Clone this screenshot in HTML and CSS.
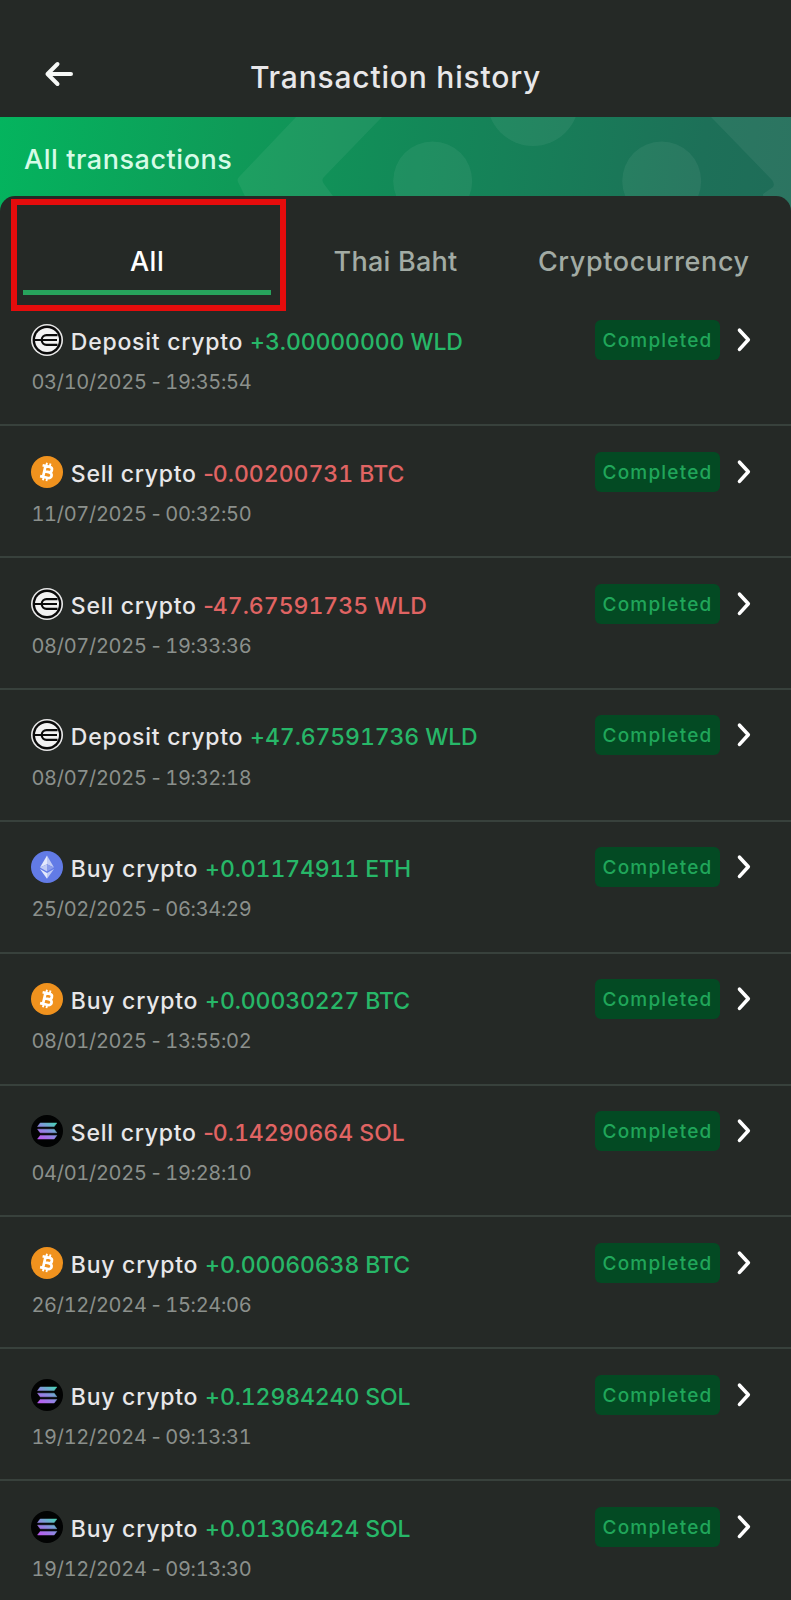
FILE: index.html
```html
<!DOCTYPE html>
<html lang="en">
<head>
<meta charset="utf-8">
<title>Transaction history</title>
<link rel="stylesheet" href="styles.css">
</head>
<body>
<svg class="symbols" aria-hidden="true">
  <defs>
    <linearGradient id="sol-gradient" gradientUnits="userSpaceOnUse" x1="10" y1="24" x2="22" y2="7">
      <stop offset="0" stop-color="#b95cf0"/>
      <stop offset="0.5" stop-color="#8a8ee0"/>
      <stop offset="1" stop-color="#4ccfb8"/>
    </linearGradient>
    <symbol id="wld" viewBox="0 0 32 32">
      <circle cx="16" cy="16" r="16" fill="#e8e8e8"/>
      <circle cx="16" cy="16" r="14.4" fill="#0a0a0a"/>
      <circle cx="16" cy="16" r="12" fill="#f2f2f2"/>
      <path d="M26.500 11.200H15.500a4.800 4.800 0 0 0 0 9.600H26.500M3.500 16H26" fill="none" stroke="#0a0a0a" stroke-width="2.2"/>
    </symbol>
    <symbol id="btc" viewBox="0 0 32 32">
      <circle cx="16" cy="16" r="16" fill="#f0921e"/>
      <g transform="rotate(13 16 16)" fill="none" stroke="#fff">
        <path d="M13.200 10.400V21.600M10.200 10.400H17.600a2.700 2.700 0 0 1 0 5.400H13.200M17.600 15.800H18.400a2.900 2.900 0 0 1 0 5.800H10.200" stroke-width="2.700"/>
        <path d="M13.900 7V10.400M17.500 7V10.400M13.900 21.400V25M17.500 21.400V25" stroke-width="1.900"/>
      </g>
    </symbol>
    <symbol id="eth" viewBox="0 0 32 32">
      <circle cx="16" cy="16" r="16" fill="#627be6"/>
      <path d="M16 4.500L9 16.400L16 13.200Z" fill="#e4e9fb"/>
      <path d="M16 4.500L23 16.400L16 13.200Z" fill="#c0cbf5"/>
      <path d="M9 16.400L16 13.200V20.600Z" fill="#c0cbf5"/>
      <path d="M23 16.400L16 13.200V20.600Z" fill="#8b9deb"/>
      <path d="M9 17.900L16 22V27.800Z" fill="#e4e9fb"/>
      <path d="M23 17.900L16 22V27.800Z" fill="#c0cbf5"/>
    </symbol>
    <symbol id="sol" viewBox="0 0 32 32">
      <circle cx="16" cy="16" r="16" fill="#020303"/>
      <path d="M9.200 8H25.800L23.200 11.600H6.600ZM6.600 14.200H23.200L25.800 17.800H9.200ZM9.200 20.400H25.800L23.200 24H6.600Z" fill="url(#sol-gradient)" stroke="url(#sol-gradient)" stroke-width="0.5" stroke-linejoin="round"/>
    </symbol>
    <symbol id="chevron" viewBox="0 0 16 26">
      <path d="M3.500 3.200L12.300 12.800L3.500 22.400" fill="none" stroke="#fff" stroke-width="3.6" stroke-linecap="round" stroke-linejoin="round"/>
    </symbol>
  </defs>
</svg>

<header class="topbar">
  <svg class="back" viewBox="0 0 32 28"><path d="M28 14H4.500M14.500 4L4.500 14L14.500 24" fill="none" stroke="#f6f8f6" stroke-width="4" stroke-linecap="round" stroke-linejoin="round"/></svg>
  <h1 class="title">Transaction history</h1>
</header>

<section class="banner">
  <svg class="pattern" viewBox="0 0 791 100" fill="#fff" fill-opacity="0.06">
    <path d="M296 0H382L324 60Q321 63 324 67L333 79V100H255L239 67Q236 63 239 60Z"/>
    <circle cx="432.700" cy="64" r="39.500"/>
    <circle cx="533" cy="-17" r="46"/>
    <circle cx="661.700" cy="64" r="39.500"/>
    <path d="M711 0H791V100H765L763 77L773 70Q775 67 772 63Z"/>
  </svg>
  <h2 class="subtitle">All transactions</h2>
</section>

<main class="sheet">
  <nav class="tabs">
    <span class="tab active">All</span>
    <span class="tab baht">Thai Baht</span>
    <span class="tab">Cryptocurrency</span>
  </nav>
  <div class="highlight"></div>
  <div class="list" id="list"></div>
</main>
<script src="main.js"></script>
</body>
</html>
```
FILE: styles.css
```css
* { box-sizing: border-box; }
body {
  margin: 0;
  width: 791px;
  height: 1600px;
  overflow: hidden;
  background: #252926;
  color: #e8e7e9;
  font-family: Inter, "Liberation Sans", sans-serif;
}
h1, h2 { margin: 0; font-weight: 500; }
svg { display: block; flex: none; }
.symbols { position: absolute; width: 0; height: 0; }

.topbar {
  display: grid;
  grid-template-columns: 85px 1fr 85px;
  align-items: start;
  height: 117px;
}
.back { width: 32px; height: 28px; margin: 60px 0 0 43px; }
.title {
  margin-top: 57px;
  font-size: 30px;
  line-height: 40px;
  letter-spacing: 0.8px;
  text-align: center;
}

.banner {
  position: relative;
  height: 99px;
  background: linear-gradient(97deg, #04b45e 0%, #0f9a58 30%, #138858 53%, #1d7058 88%, #1f6c58 100%);
}
.pattern { position: absolute; top: 0; left: 0; width: 791px; height: 100px; }
.subtitle {
  position: relative;
  padding: 25px 0 0 24px;
  font-size: 27px;
  line-height: 36px;
  letter-spacing: 0.55px;
  color: #d6fbe7;
}

.sheet {
  position: relative;
  margin-top: -20px;
  border-radius: 15px 15px 0 0;
  background: #252926;
}
.tabs {
  display: grid;
  grid-template-columns: repeat(3, 1fr);
  height: 99px;
  padding: 0 23px;
}
.tab {
  padding-top: 48px;
  font-size: 27px;
  line-height: 36px;
  font-weight: 500;
  letter-spacing: 0.6px;
  text-align: center;
  color: #a2aba4;
}
.baht { letter-spacing: 0.25px; }
.active { color: #fff; border-bottom: 5px solid #27a35c; }
.highlight {
  position: absolute;
  top: 3px;
  left: 11px;
  width: 275px;
  height: 112px;
  border: 6px solid #e50c0c;
}

.row {
  display: flex;
  align-items: flex-start;
  height: 131.87px;
  padding: 29.4px 39.500px 0 31.4px;
  border-bottom: 2px solid #38413c;
}
.row:first-child { height: 131.3px; padding-top: 28.8px; }
.row:last-child { border-bottom: 0; }
.details { flex: 1; }
.heading { display: flex; align-items: flex-start; }
.coin { width: 32px; height: 32px; }
.kind, .amount {
  padding-top: 2px;
  font-size: 23px;
  line-height: 32px;
  font-weight: 500;
  white-space: nowrap;
}
.kind { margin-left: 7.4px; letter-spacing: 0.76px; }
.amount { margin-left: 6.5px; font-variant-numeric: tabular-nums; letter-spacing: -0.1px; }
.sign { font-variant-numeric: proportional-nums; }
.plus { color: #27b768; }
.minus { color: #e06463; letter-spacing: 0; }
.minus .sign { letter-spacing: -1px; }
.date {
  padding-top: 12.2px;
  font-size: 20px;
  line-height: 24px;
  font-variant-numeric: tabular-nums;
  letter-spacing: -0.3px;
  color: #8b908c;
}
.dash { font-variant-numeric: proportional-nums; letter-spacing: -0.6px; }
.status {
  width: 125px;
  height: 40px;
  margin-top: -4px;
  border-radius: 6px;
  background: #034a23;
  color: #20a65a;
  font-size: 19px;
  line-height: 42px;
  font-weight: 500;
  letter-spacing: 1.2px;
  text-align: center;
}
.chevron { width: 16px; height: 26px; margin: 3px 0 0 15.500px; }
```
FILE: main.js
```js
const transactions = [
  ['wld', 'Deposit crypto', '+', '3.00000000 WLD', '03/10/2025', '19:35:54'],
  ['btc', 'Sell crypto', '-', '0.00200731 BTC', '11/07/2025', '00:32:50'],
  ['wld', 'Sell crypto', '-', '47.67591735 WLD', '08/07/2025', '19:33:36'],
  ['wld', 'Deposit crypto', '+', '47.67591736 WLD', '08/07/2025', '19:32:18'],
  ['eth', 'Buy crypto', '+', '0.01174911 ETH', '25/02/2025', '06:34:29'],
  ['btc', 'Buy crypto', '+', '0.00030227 BTC', '08/01/2025', '13:55:02'],
  ['sol', 'Sell crypto', '-', '0.14290664 SOL', '04/01/2025', '19:28:10'],
  ['btc', 'Buy crypto', '+', '0.00060638 BTC', '26/12/2024', '15:24:06'],
  ['sol', 'Buy crypto', '+', '0.12984240 SOL', '19/12/2024', '09:13:31'],
  ['sol', 'Buy crypto', '+', '0.01306424 SOL', '19/12/2024', '09:13:30']
];

document.getElementById('list').innerHTML = transactions.map(([coin, kind, sign, amount, date, time]) => `
  <article class="row">
    <div class="details">
      <div class="heading">
        <svg class="coin"><use href="#${coin}"/></svg>
        <span class="kind">${kind}</span>
        <span class="amount ${sign === '+' ? 'plus' : 'minus'}"><span class="sign">${sign}</span>${amount}</span>
      </div>
      <div class="date">${date}<span class="dash"> - </span>${time}</div>
    </div>
    <span class="status">Completed</span>
    <svg class="chevron"><use href="#chevron"/></svg>
  </article>`).join('');
```
